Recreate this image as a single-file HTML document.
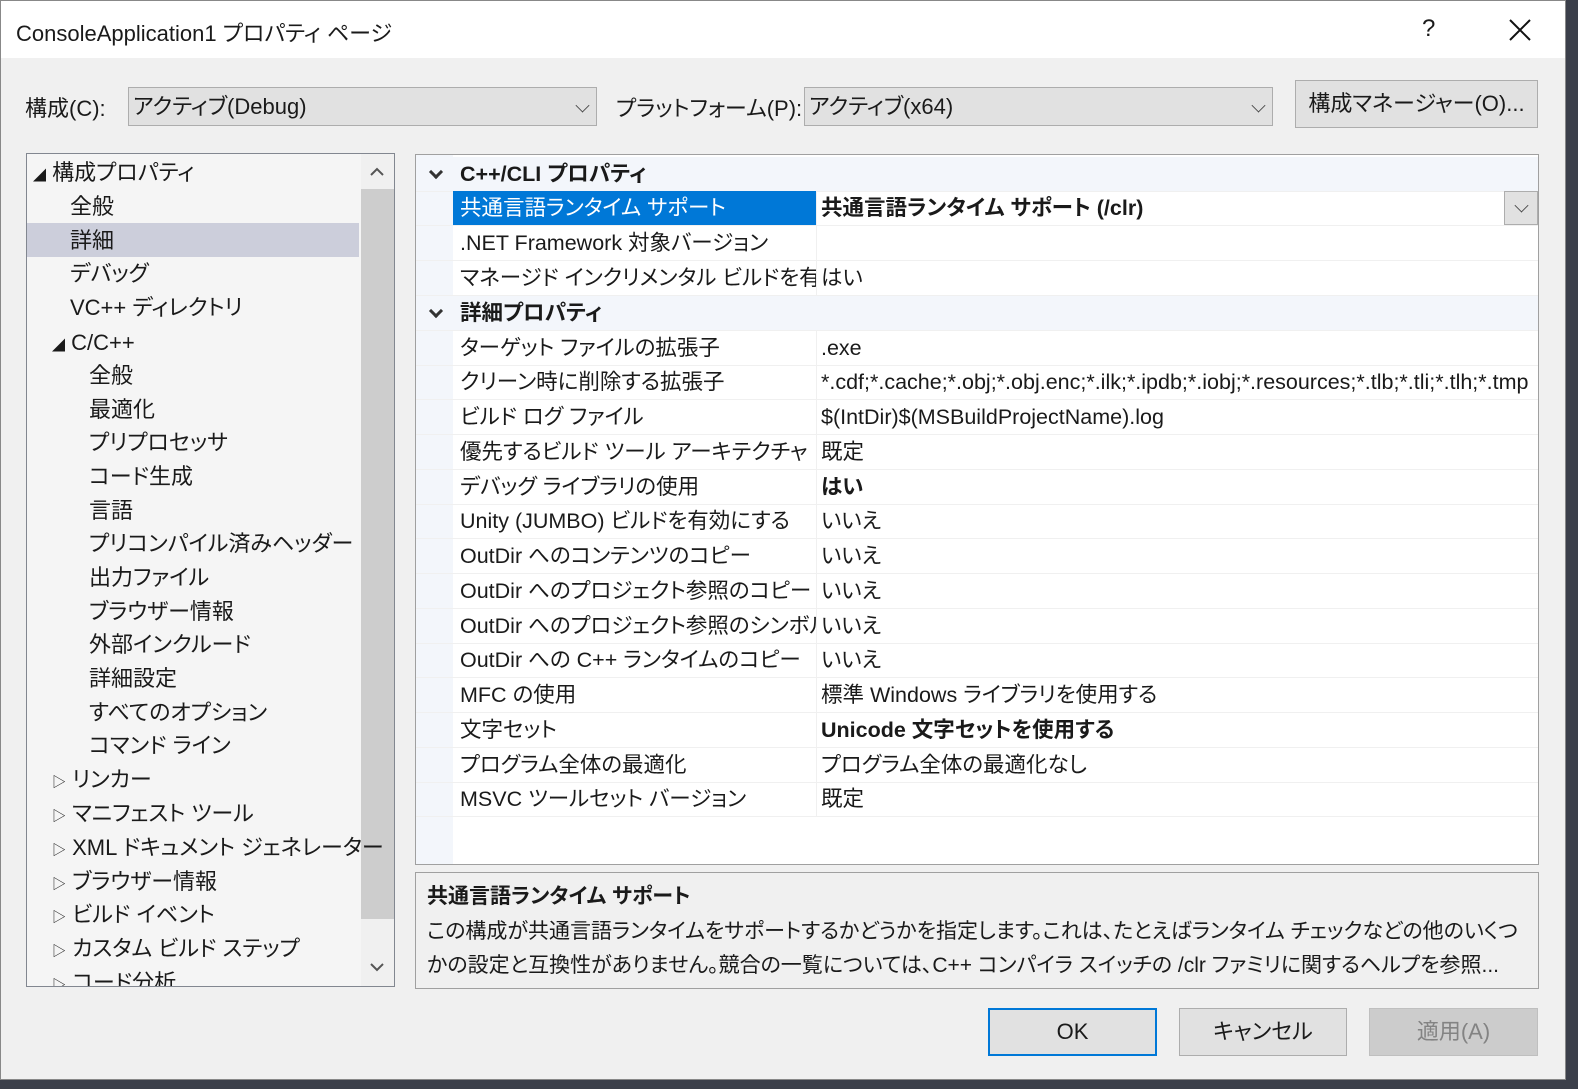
<!DOCTYPE html>
<html><head><meta charset="utf-8"><style>
*{margin:0;padding:0;box-sizing:border-box}
body{width:1578px;height:1089px;background:#3b3f4a;position:relative;overflow:hidden;font-family:"Liberation Sans","Noto Sans CJK JP",sans-serif;font-size:21px;color:#1a1a1a;font-feature-settings:"palt" 1}
.dlg{position:absolute;left:0;top:0;width:1566px;height:1080px;background:#f0f0f0;border:1px solid #888}
.title{position:absolute;left:0;top:0;width:100%;height:57px;background:#fff}
.abs{position:absolute;white-space:nowrap}
.combo{position:absolute;height:39px;background:#e1e1e1;border:1px solid #adadad;line-height:37px;padding-left:4px;font-size:22px}
.chev{position:absolute;right:8px;top:12px;width:11px;height:11px;border-right:1.3px solid #444;border-bottom:1.3px solid #444;transform:rotate(45deg) scale(.9,.9)}
.btn{position:absolute;height:48px;background:#e1e1e1;border:1px solid #adadad;text-align:center;line-height:46px;font-size:22px}
.tree{position:absolute;left:25px;top:152px;width:369px;height:834px;background:#f5f5f5;border:1px solid #828790;overflow:hidden}
.ti{position:absolute;height:34px;line-height:34px;white-space:nowrap;font-size:22px}
.grid{position:absolute;left:414px;top:153px;width:1124px;height:711px;background:#fff;border:1px solid #a0a0a0;overflow:hidden}
.row{position:absolute;left:0;width:1122px;height:35px;line-height:34px;border-bottom:1px solid #f0f0f0;white-space:nowrap;font-size:21.5px}
.row .n{position:absolute;left:37px;width:364px;height:34px;padding-left:7px;overflow:hidden;border-right:1px solid #f0f0f0}
.row .v{position:absolute;left:401px;padding-left:4px}
.gut{position:absolute;left:0;top:0;width:37px;height:711px;background:#f3f6fb}
.hdr{background:#f3f6fb;font-weight:bold}
.hdr .t{position:absolute;left:44px}
.dn{position:absolute;left:15px;top:10px;width:10px;height:10px;border-right:3px solid #333;border-bottom:3px solid #333;transform:rotate(45deg)}
b{font-weight:bold}
</style></head><body>
<div class="dlg">
<div class="title"></div>
<div class="abs" style="left:15px;top:15px;font-size:22px">ConsoleApplication1 プロパティ ページ</div>
<div class="abs" style="left:1421px;top:14px;font-size:24px">?</div>
<svg class="abs" style="left:1508px;top:18px" width="22" height="22"><path d="M1 1L21 21M21 1L1 21" stroke="#111" stroke-width="2"/></svg>

<div class="abs" style="left:24px;top:90px;font-size:22px">構成(C):</div>
<div class="combo" style="left:127px;top:86px;width:469px">アクティブ(Debug)<div class="chev"></div></div>
<div class="abs" style="left:615px;top:90px;font-size:22px">プラットフォーム(P):</div>
<div class="combo" style="left:803px;top:86px;width:469px">アクティブ(x64)<div class="chev"></div></div>
<div class="btn" style="left:1294px;top:79px;width:243px">構成マネージャー(O)...</div>

<div class="tree">
<div style="position:absolute;left:334px;top:0;width:34px;height:832px;background:#f0f0f0"></div>
<div style="position:absolute;left:334px;top:35px;width:33px;height:730px;background:#cdcdcd"></div>
<svg style="position:absolute;left:342px;top:13px" width="16" height="10"><path d="M2 8L8 2L14 8" stroke="#555" stroke-width="2" fill="none"/></svg>
<svg style="position:absolute;left:342px;top:808px" width="16" height="10"><path d="M2 2L8 8L14 2" stroke="#555" stroke-width="2" fill="none"/></svg>
<div style="position:absolute;left:0;top:69px;width:332px;height:34px;background:#cccedb"></div>
<div class="ti" style="left:6px;top:2px"><span style="font-size:13px">◢</span> 構成プロパティ</div>
<div class="ti" style="left:43px;top:36px">全般</div>
<div class="ti" style="left:43px;top:70px">詳細</div>
<div class="ti" style="left:43px;top:103px">デバッグ</div>
<div class="ti" style="left:43px;top:137px">VC++ ディレクトリ</div>
<div class="ti" style="left:25px;top:172px"><span style="font-size:13px">◢</span> C/C++</div>
<div class="ti" style="left:62px;top:205px">全般</div>
<div class="ti" style="left:62px;top:239px">最適化</div>
<div class="ti" style="left:62px;top:272px">プリプロセッサ</div>
<div class="ti" style="left:62px;top:306px">コード生成</div>
<div class="ti" style="left:62px;top:340px">言語</div>
<div class="ti" style="left:62px;top:373px">プリコンパイル済みヘッダー</div>
<div class="ti" style="left:62px;top:407px">出力ファイル</div>
<div class="ti" style="left:62px;top:441px">ブラウザー情報</div>
<div class="ti" style="left:62px;top:474px">外部インクルード</div>
<div class="ti" style="left:62px;top:508px">詳細設定</div>
<div class="ti" style="left:62px;top:542px">すべてのオプション</div>
<div class="ti" style="left:62px;top:575px">コマンド ライン</div>
<div class="ti" style="left:25px;top:609px"><span style="font-size:14px">▷</span> リンカー</div>
<div class="ti" style="left:25px;top:643px"><span style="font-size:14px">▷</span> マニフェスト ツール</div>
<div class="ti" style="left:25px;top:677px"><span style="font-size:14px">▷</span> XML ドキュメント ジェネレーター</div>
<div class="ti" style="left:25px;top:711px"><span style="font-size:14px">▷</span> ブラウザー情報</div>
<div class="ti" style="left:25px;top:744px"><span style="font-size:14px">▷</span> ビルド イベント</div>
<div class="ti" style="left:25px;top:778px"><span style="font-size:14px">▷</span> カスタム ビルド ステップ</div>
<div class="ti" style="left:25px;top:812px"><span style="font-size:14px">▷</span> コード分析</div>
</div>

<div class="grid">
<div class="gut"></div>
<div class="row hdr" style="top:2px"><div class="dn"></div><span class="t">C++/CLI プロパティ</span></div>
<div class="row" style="top:36px"><div class="n" style="background:#0078d7;color:#fff">共通言語ランタイム サポート</div><div class="v"><b>共通言語ランタイム サポート (/clr)</b></div>
<div style="position:absolute;right:0;top:0;width:34px;height:34px;background:#e1e1e1;border:1px solid #adadad"><div class="chev" style="right:10px;top:8px"></div></div></div>
<div class="row" style="top:71px"><div class="n">.NET Framework 対象バージョン</div></div>
<div class="row" style="top:106px"><div class="n">マネージド インクリメンタル ビルドを有効にする</div><div class="v">はい</div></div>
<div class="row hdr" style="top:141px"><div class="dn"></div><span class="t">詳細プロパティ</span></div>
<div class="row" style="top:176px"><div class="n">ターゲット ファイルの拡張子</div><div class="v">.exe</div></div>
<div class="row" style="top:210px"><div class="n">クリーン時に削除する拡張子</div><div class="v">*.cdf;*.cache;*.obj;*.obj.enc;*.ilk;*.ipdb;*.iobj;*.resources;*.tlb;*.tli;*.tlh;*.tmp</div></div>
<div class="row" style="top:245px"><div class="n">ビルド ログ ファイル</div><div class="v">$(IntDir)$(MSBuildProjectName).log</div></div>
<div class="row" style="top:280px"><div class="n">優先するビルド ツール アーキテクチャ</div><div class="v">既定</div></div>
<div class="row" style="top:315px"><div class="n">デバッグ ライブラリの使用</div><div class="v"><b>はい</b></div></div>
<div class="row" style="top:349px"><div class="n">Unity (JUMBO) ビルドを有効にする</div><div class="v">いいえ</div></div>
<div class="row" style="top:384px"><div class="n">OutDir へのコンテンツのコピー</div><div class="v">いいえ</div></div>
<div class="row" style="top:419px"><div class="n">OutDir へのプロジェクト参照のコピー</div><div class="v">いいえ</div></div>
<div class="row" style="top:454px"><div class="n">OutDir へのプロジェクト参照のシンボルのコピー</div><div class="v">いいえ</div></div>
<div class="row" style="top:488px"><div class="n">OutDir への C++ ランタイムのコピー</div><div class="v">いいえ</div></div>
<div class="row" style="top:523px"><div class="n">MFC の使用</div><div class="v">標準 Windows ライブラリを使用する</div></div>
<div class="row" style="top:558px"><div class="n">文字セット</div><div class="v"><b>Unicode 文字セットを使用する</b></div></div>
<div class="row" style="top:593px"><div class="n">プログラム全体の最適化</div><div class="v">プログラム全体の最適化なし</div></div>
<div class="row" style="top:627px"><div class="n">MSVC ツールセット バージョン</div><div class="v">既定</div></div>
</div>

<div class="abs" style="left:414px;top:871px;width:1124px;height:117px;border:1px solid #a0a0a0;background:#f0f0f0;overflow:hidden"></div>
<div class="abs" style="left:426px;top:879px;font-size:21px;font-weight:bold">共通言語ランタイム サポート</div>
<div class="abs" style="left:426px;top:914px;font-size:21px;width:1100px;overflow:hidden">この構成が共通言語ランタイムをサポートするかどうかを指定します。これは、たとえばランタイム チェックなどの他のいくつ</div>
<div class="abs" style="left:426px;top:948px;font-size:21px;width:1100px;overflow:hidden">かの設定と互換性がありません。競合の一覧については、C++ コンパイラ スイッチの /clr ファミリに関するヘルプを参照...</div>

<div class="btn" style="left:987px;top:1007px;width:169px;border:2px solid #0078d7;line-height:44px">OK</div>
<div class="btn" style="left:1178px;top:1007px;width:168px">キャンセル</div>
<div class="btn" style="left:1368px;top:1007px;width:169px;background:#cccccc;border-color:#bfbfbf;color:#838383">適用(A)</div>
</div>
</body></html>
